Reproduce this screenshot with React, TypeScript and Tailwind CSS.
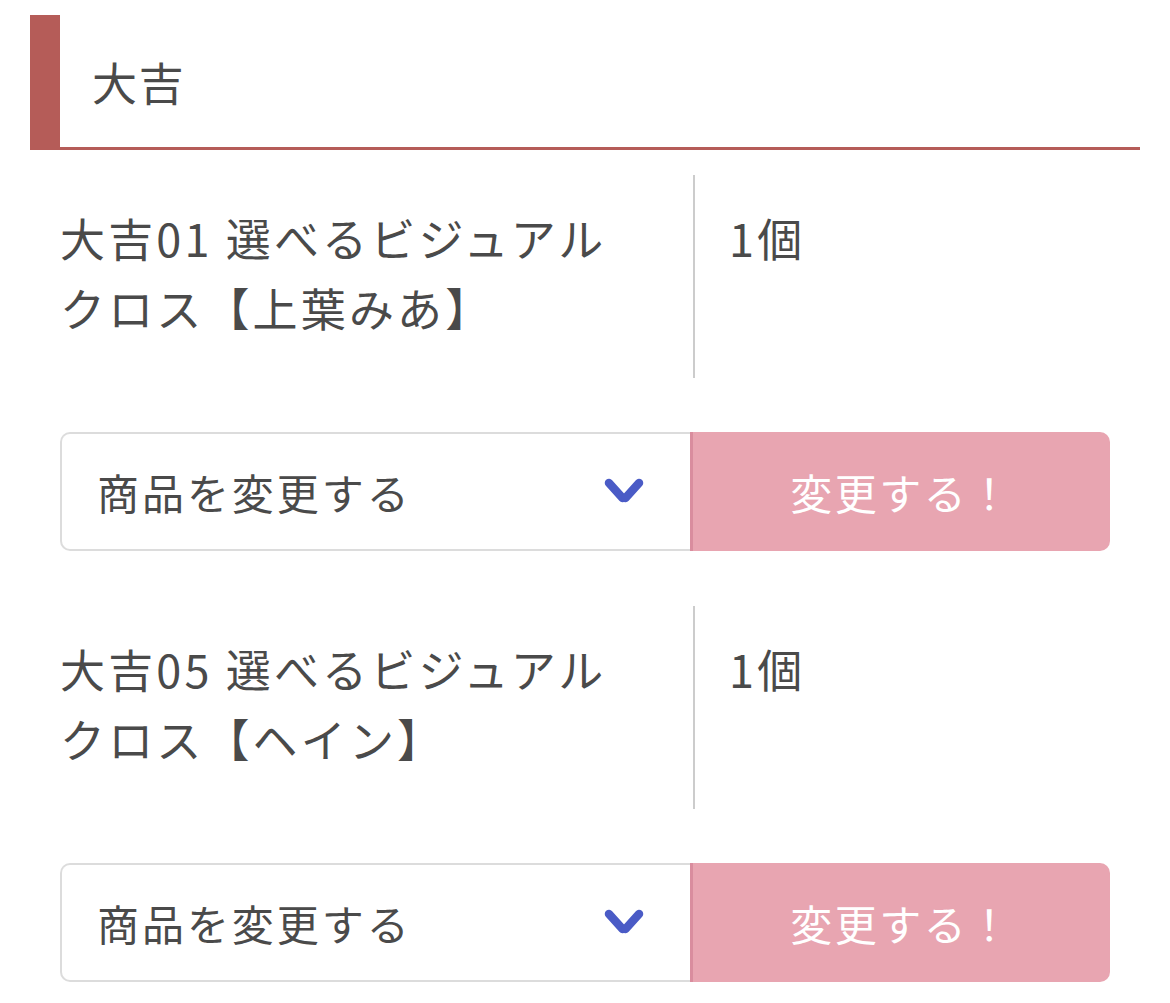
import React from "react";

const items = [
  { title: "大吉01 選べるビジュアルクロス【上葉みあ】", qty: "1個" },
  { title: "大吉05 選べるビジュアルクロス【ヘイン】", qty: "1個" },
];

function Chevron() {
  return (
    <svg width="42" height="30" viewBox="0 0 42 30" fill="none">
      <line x1="6" y1="6" x2="19.5" y2="21" stroke="#4a5bc6" strokeWidth="8.5" strokeLinecap="round" />
      <line x1="36" y1="6" x2="22.5" y2="21" stroke="#4a5bc6" strokeWidth="8.5" strokeLinecap="round" />
    </svg>
  );
}

export default function App() {
  return (
    <div
      className="w-[1170px] min-h-[1003px] bg-white pt-[15px] px-[30px] text-[#4a4a4a]"
      style={{ fontFamily: '"Noto Sans CJK JP", "Noto Sans", sans-serif' }}
    >
      <div className="h-[135px] border-l-[30px] border-b-[3px] border-[#b55c58] pl-[32px] flex items-center text-[45px] leading-none tracking-[0.04em]">
        大吉
      </div>
      <div className="px-[30px]">
        {items.map((it, i) => (
          <div key={i} className={i === 0 ? "mt-[25px]" : "mt-[55px]"}>
            <div className="flex h-[203px]">
              <div className="w-[635px] border-r-2 border-[#cccccc] pt-[28px] pr-[40px] text-[45px] leading-[70px] tracking-[0.07em]">
                {it.title}
              </div>
              <div className="flex-1 pt-[28px] pl-[34px] text-[45px] leading-[70px] tracking-[0.07em]">
                {it.qty}
              </div>
            </div>
            <div className="mt-[54px] flex h-[119px]">
              <div className="w-[630px] border-2 border-r-0 border-[#dcdcdc] rounded-l-[10px] flex items-center justify-between pl-[35px] pr-[45px]">
                <span className="text-[42px] tracking-[0.07em] leading-none">商品を変更する</span>
                <Chevron />
              </div>
              <button className="flex-1 bg-[#e8a5b1] border-l-[3px] border-[#d98d9e] rounded-r-[10px] flex items-center justify-center text-white text-[42px] tracking-[0.06em] leading-none">
                変更する！
              </button>
            </div>
          </div>
        ))}
      </div>
    </div>
  );
}
